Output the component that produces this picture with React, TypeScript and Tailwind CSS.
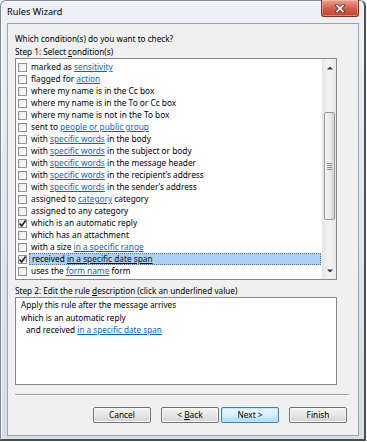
import React from "react";

type Part = [string, boolean?];
type Row = { checked?: boolean; selected?: boolean; parts: Part[] };

const rows: Row[] = [
  { parts: [["marked as "], ["sensitivity", true]] },
  { parts: [["flagged for "], ["action", true]] },
  { parts: [["where my name is in the Cc box"]] },
  { parts: [["where my name is in the To or Cc box"]] },
  { parts: [["where my name is not in the To box"]] },
  { parts: [["sent to "], ["people or public group", true]] },
  { parts: [["with "], ["specific words", true], [" in the body"]] },
  { parts: [["with "], ["specific words", true], [" in the subject or body"]] },
  { parts: [["with "], ["specific words", true], [" in the message header"]] },
  { parts: [["with "], ["specific words", true], [" in the recipient\u2019s address"]] },
  { parts: [["with "], ["specific words", true], [" in the sender\u2019s address"]] },
  { parts: [["assigned to "], ["category", true], [" category"]] },
  { parts: [["assigned to any category"]] },
  { checked: true, parts: [["which is an automatic reply"]] },
  { parts: [["which has an attachment"]] },
  { parts: [["with a size "], ["in a specific range", true]] },
  { checked: true, selected: true, parts: [["received "], ["in a specific date span", true]] },
  { parts: [["uses the "], ["form name", true], [" form"]] },
];

function CheckBox({ checked }: { checked?: boolean }) {
  return (
    <div className="w-[9px] h-[9px] shrink-0 border border-[#8e8f8f] bg-gradient-to-br from-[#e6e6e6] to-white relative">
      {checked && (
        <svg width="9" height="9" viewBox="0 0 9 9" className="absolute left-[-1px] top-[-1px]">
          <path d="M1.6 4.6 L3.6 6.9 L7.6 1.6" stroke="#1a1a1a" strokeWidth="1.6" fill="none" />
        </svg>
      )}
    </div>
  );
}

function Button({ children, primary }: { children: React.ReactNode; primary?: boolean }) {
  return (
    <div
      className={
        "w-[58px] h-[16px] rounded-[2px] border flex items-center justify-center text-[8.3px] leading-none text-black " +
        (primary
          ? "border-[#3c7fb1] bg-gradient-to-b from-[#eaf6fd] via-[#d9f0fc] to-[#a7d9f5] shadow-[inset_0_0_0_1px_#c6eafd]"
          : "border-[#707070] bg-gradient-to-b from-[#f4f4f4] via-[#e6e6e6] to-[#d2d2d2] shadow-[inset_0_0_0_1px_#fbfbfb]")
      }
    >
      {children}
    </div>
  );
}

export default function App() {
  return (
    <div
      className="w-[367px] h-[442px] bg-white overflow-hidden"
      style={{ fontFamily: '"Noto Sans", "Open Sans", sans-serif' }}
    >
      <div className="w-[366px] h-[441px] rounded-t-[6px] border border-[#7d8894] border-r-2 border-b-2 border-r-[#4a5058] border-b-[#4a5058] bg-gradient-to-b from-[#eef2f6] via-[#dfe6ed] to-[#d5dde6] flex flex-col shadow-[inset_1px_1px_0_#ffffff]">
        {/* title bar */}
        <div className="h-[22px] shrink-0 flex justify-between">
          <div className="pl-[6px] pt-[5px] text-[9.2px] leading-[12px] text-black">Rules Wizard</div>
          <div className="mr-[5px] mt-[-1px] w-[38px] h-[17px] rounded-b-[3px] border border-t-0 border-[#7a2e24] bg-gradient-to-b from-[#e9a597] via-[#d3604c] to-[#c2402c] shadow-[inset_0_0_0_1px_rgba(255,200,190,0.5)] flex items-center justify-center">
            <svg width="10" height="9" viewBox="0 0 10 9">
              <path d="M2 1.5 L8 7.5 M8 1.5 L2 7.5" stroke="#5a2018" strokeWidth="3.2" strokeLinecap="square" />
              <path d="M2 1.5 L8 7.5 M8 1.5 L2 7.5" stroke="#ffffff" strokeWidth="1.8" strokeLinecap="square" />
            </svg>
          </div>
        </div>

        {/* client area */}
        <div className="flex-1 ml-[6px] mr-[5px] mb-[3px] border border-[#9aa3ad] bg-[#f0f0f0] flex flex-col pl-[7px] pt-[8px]">
          <div className="h-[13px] text-[8.2px] leading-[13px] text-black">Which condition(s) do you want to check?</div>
          <div className="h-[13px] text-[8.2px] leading-[13px] text-black">
            Step 1: Select <span className="underline">c</span>ondition(s)
          </div>

          {/* list box */}
          <div className="w-[322px] h-[222px] border border-[#828790] bg-white flex">
            <div className="flex-1 flex flex-col pt-[2px] pl-[2px] pr-[1px]">
              {rows.map((r, i) => (
                <div key={i} className="h-[12px] flex items-center">
                  <CheckBox checked={r.checked} />
                  <div
                    className={
                      "ml-[2px] flex-1 h-[12px] pl-[2px] text-[8.3px] leading-[10px] flex items-center whitespace-nowrap text-black " +
                      (r.selected ? "bg-[#abd0f5] border border-dotted border-[#5e7590] pl-[1px]" : "")
                    }
                  >
                    {r.parts.map(([t, link], j) =>
                      link ? (
                        <span key={j} className={"underline " + (r.selected ? "text-[#111]" : "text-[#0b5fd1]")}>
                          {t}
                        </span>
                      ) : (
                        <span key={j} className="whitespace-pre">{t}</span>
                      )
                    )}
                  </div>
                </div>
              ))}
            </div>
            {/* scrollbar */}
            <div className="w-[14px] h-full border-l border-[#e6e6e6] bg-gradient-to-r from-[#e8e8e8] via-[#f4f4f4] to-[#e8e8e8] flex flex-col items-center">
              <div className="h-[16px] w-full flex items-center justify-center pt-[1px]">
                <svg width="6" height="4" viewBox="0 0 6 4">
                  <path d="M0 3.5 L3 0.5 L6 3.5 Z" fill="#333" />
                </svg>
              </div>
              <div className="mt-[37px] w-[11px] h-[108px] rounded-[2px] border border-[#979797] bg-gradient-to-r from-[#f6f6f6] via-[#eaeaea] to-[#d6d6d6] flex flex-col items-center justify-center gap-[1px]">
                <div className="w-[5px] h-[1px] bg-[#8a8a8a]" />
                <div className="w-[5px] h-[1px] bg-[#8a8a8a]" />
                <div className="w-[5px] h-[1px] bg-[#8a8a8a]" />
                <div className="w-[5px] h-[1px] bg-[#8a8a8a]" />
              </div>
              <div className="flex-1" />
              <div className="h-[16px] w-full flex items-center justify-center pb-[1px]">
                <svg width="6" height="4" viewBox="0 0 6 4">
                  <path d="M0 0.5 L3 3.5 L6 0.5 Z" fill="#333" />
                </svg>
              </div>
            </div>
          </div>

          <div className="mt-[4px] h-[13px] text-[8.2px] leading-[13px] text-black">
            Step 2: Edit the rule <span className="underline">d</span>escription (click an underlined value)
          </div>
          <div className="w-[322px] h-[88px] border border-[#828790] bg-white pl-[5px] pt-[1px] text-[8.2px] leading-[12.5px] text-black">
            <div>Apply this rule after the message arrives</div>
            <div>which is an automatic reply</div>
            <div className="pl-[5px]">
              and received <span className="underline text-[#0b5fd1]">in a specific date span</span>
            </div>
          </div>

          <div className="mt-[9px] mr-[9px] h-[2px] border-t border-[#a0a0a0] border-b border-b-white" />

          <div className="mt-[11px] pr-[11px] flex justify-end">
            <Button>Cancel</Button>
            <div className="w-[10px]" />
            <Button>
              <span className="whitespace-pre">{"< "}</span>
              <span className="underline">B</span>ack
            </Button>
            <div className="w-[2px]" />
            <Button primary>Next &gt;</Button>
            <div className="w-[10px]" />
            <Button>Finish</Button>
          </div>
        </div>
      </div>
    </div>
  );
}
